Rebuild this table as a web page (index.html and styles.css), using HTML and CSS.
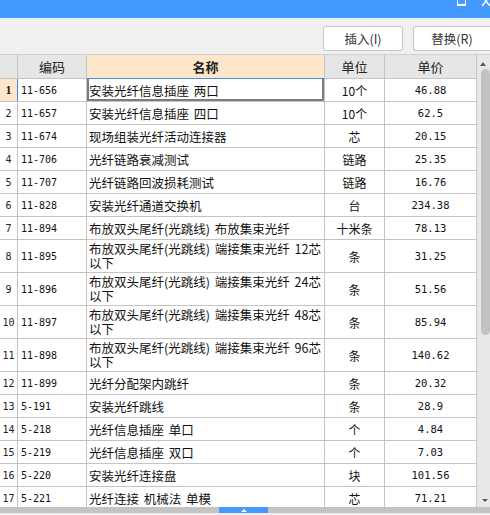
FILE: index.html
```html
<!DOCTYPE html>
<html lang="zh-CN">
<head>
<meta charset="utf-8">
<title>定额</title>
<link rel="stylesheet" href="styles.css">
</head>
<body>
<div class="titlebar">
  <svg class="ico-max" width="9" height="6" viewBox="0 0 9 6"><rect x="0.5" y="-3" width="8" height="7.5" fill="none" stroke="#fff" stroke-width="1"/><line x1="0" y1="5" x2="9" y2="5" stroke="#fff" stroke-width="2"/></svg>
  <svg class="ico-close" width="8" height="7" viewBox="0 0 8 7"><line x1="0" y1="-4" x2="8" y2="6" stroke="#fff" stroke-width="1.4"/><line x1="8" y1="-4" x2="0" y2="6" stroke="#fff" stroke-width="1.4"/></svg>
</div>
<div class="toolbar">
  <button class="btn btn-insert">插入(I)</button>
  <button class="btn btn-replace">替换(R)</button>
</div>
<div class="main">
  <div class="grid">
    <div class="row head">
      <div class="c rn"></div>
      <div class="c hc">编码</div>
      <div class="c hc hsel">名称</div>
      <div class="c hc">单位</div>
      <div class="c hc">单价</div>
    </div>
    <div class="row cur">
      <div class="c rn">1</div><div class="c code">11-656</div><div class="c name sel">安装光纤信息插座 两口</div><div class="c unit">10个</div><div class="c price">46.88</div>
    </div>
    <div class="row">
      <div class="c rn">2</div><div class="c code">11-657</div><div class="c name">安装光纤信息插座 四口</div><div class="c unit">10个</div><div class="c price">62.5</div>
    </div>
    <div class="row">
      <div class="c rn">3</div><div class="c code">11-674</div><div class="c name">现场组装光纤活动连接器</div><div class="c unit">芯</div><div class="c price">20.15</div>
    </div>
    <div class="row">
      <div class="c rn">4</div><div class="c code">11-706</div><div class="c name">光纤链路衰减测试</div><div class="c unit">链路</div><div class="c price">25.35</div>
    </div>
    <div class="row">
      <div class="c rn">5</div><div class="c code">11-707</div><div class="c name">光纤链路回波损耗测试</div><div class="c unit">链路</div><div class="c price">16.76</div>
    </div>
    <div class="row">
      <div class="c rn">6</div><div class="c code">11-828</div><div class="c name">安装光纤通道交换机</div><div class="c unit">台</div><div class="c price">234.38</div>
    </div>
    <div class="row">
      <div class="c rn">7</div><div class="c code">11-894</div><div class="c name">布放双头尾纤(光跳线) 布放集束光纤</div><div class="c unit">十米条</div><div class="c price">78.13</div>
    </div>
    <div class="row tall">
      <div class="c rn">8</div><div class="c code">11-895</div><div class="c name"><span class="ln">布放双头尾纤(光跳线) 端接集束光纤 12芯</span><span class="ln">以下</span></div><div class="c unit">条</div><div class="c price">31.25</div>
    </div>
    <div class="row tall">
      <div class="c rn">9</div><div class="c code">11-896</div><div class="c name"><span class="ln">布放双头尾纤(光跳线) 端接集束光纤 24芯</span><span class="ln">以下</span></div><div class="c unit">条</div><div class="c price">51.56</div>
    </div>
    <div class="row tall">
      <div class="c rn">10</div><div class="c code">11-897</div><div class="c name"><span class="ln">布放双头尾纤(光跳线) 端接集束光纤 48芯</span><span class="ln">以下</span></div><div class="c unit">条</div><div class="c price">85.94</div>
    </div>
    <div class="row tall">
      <div class="c rn">11</div><div class="c code">11-898</div><div class="c name"><span class="ln">布放双头尾纤(光跳线) 端接集束光纤 96芯</span><span class="ln">以下</span></div><div class="c unit">条</div><div class="c price">140.62</div>
    </div>
    <div class="row">
      <div class="c rn">12</div><div class="c code">11-899</div><div class="c name">光纤分配架内跳纤</div><div class="c unit">条</div><div class="c price">20.32</div>
    </div>
    <div class="row">
      <div class="c rn">13</div><div class="c code">5-191</div><div class="c name">安装光纤跳线</div><div class="c unit">条</div><div class="c price">28.9</div>
    </div>
    <div class="row">
      <div class="c rn">14</div><div class="c code">5-218</div><div class="c name">光纤信息插座 单口</div><div class="c unit">个</div><div class="c price">4.84</div>
    </div>
    <div class="row">
      <div class="c rn">15</div><div class="c code">5-219</div><div class="c name">光纤信息插座 双口</div><div class="c unit">个</div><div class="c price">7.03</div>
    </div>
    <div class="row">
      <div class="c rn">16</div><div class="c code">5-220</div><div class="c name">安装光纤连接盘</div><div class="c unit">块</div><div class="c price">101.56</div>
    </div>
    <div class="row">
      <div class="c rn">17</div><div class="c code">5-221</div><div class="c name">光纤连接 机械法 单模</div><div class="c unit">芯</div><div class="c price">71.21</div>
    </div>
  </div>
  <div class="vscroll">
    <span class="arr-up"></span>
    <span class="thumb"></span>
    <span class="arr-down"></span>
  </div>
</div>
<div class="hscroll">
  <div class="hthumb"><span class="tri"></span></div>
</div>
</body>
</html>
```

FILE: styles.css
```css
* { box-sizing: border-box; }
html, body { margin: 0; padding: 0; }
body {
  width: 490px;
  height: 515px;
  overflow: hidden;
  background: #f0f0f0;
  font-family: "Noto Sans CJK SC", sans-serif;
  color: #111;
}
.titlebar {
  height: 18px;
  background: #4499ff;
  display: flex;
  justify-content: flex-end;
  align-items: flex-start;
}
.ico-max { display: block; margin-right: 16px; }
.ico-close { display: block; }

.toolbar {
  height: 37px;
  display: flex;
  justify-content: flex-end;
  align-items: flex-start;
  gap: 10px;
  padding-top: 8px;
  border-bottom: 1px solid #cfcfcf;
}
.btn {
  height: 25px;
  background: #fff;
  border: 1px solid #c6c6c6;
  border-radius: 3px;
  font-family: "Noto Sans CJK SC", sans-serif;
  font-size: 12.5px;
  color: #333;
  padding: 0;
  display: flex;
  align-items: center;
  justify-content: center;
}
.btn-insert { width: 80px; }
.btn-replace { width: 77px; border-right: none; border-radius: 3px 0 0 3px; }

.main {
  height: 452px;
  display: flex;
  overflow: hidden;
}
.grid {
  width: 477px;
  overflow: hidden;
}
.row {
  display: grid;
  grid-template-columns: 18px 69px 238px 60px 92px;
  height: 23px;
}
.row.tall { height: 33px; }
.row.head { height: 24px; }
.c {
  border-right: 1px solid #c4c4c4;
  border-bottom: 1px solid #c4c4c4;
  background: #fff;
  display: flex;
  align-items: center;
  overflow: hidden;
  white-space: nowrap;
}
.head .c {
  background: #e6e6e6;
  justify-content: center;
  font-size: 13px;
  color: #222;
}
.head .hsel {
  background: #fde6c9;
  font-weight: bold;
  border-bottom-color: #4a90e2;
}
.rn {
  justify-content: center;
  font-family: "DejaVu Sans Mono", monospace;
  font-size: 10px;
  color: #222;
}
.cur .rn {
  background: #fde6c9;
  border-right-color: #3b8ee6;
  font-family: "Liberation Serif", serif;
  font-weight: bold;
  font-size: 12px;
}
.code {
  padding-left: 3px;
  font-family: "DejaVu Sans Mono", monospace;
  font-size: 10px;
}
.name {
  padding-left: 2px;
  font-size: 12.5px;
  word-spacing: 2px;
  color: #111;
}
.row.tall .name {
  flex-direction: column;
  align-items: flex-start;
  justify-content: center;
}
.ln {
  display: block;
  height: 14px;
  line-height: 14px;
}
.name.sel {
  box-shadow: inset 2px 0 #7c7c7c, inset -2px 0 #7c7c7c, inset 0 -2px #7c7c7c;
}
.unit {
  justify-content: center;
  font-size: 12px;
}
.price {
  justify-content: center;
  font-family: "DejaVu Sans Mono", monospace;
  font-size: 10.5px;
}

.vscroll {
  width: 13px;
  background: #e8e8e8;
  display: flex;
  flex-direction: column;
  align-items: flex-start;
}
.arr-up {
  margin: 7px 0 0 3px;
  width: 0;
  height: 0;
  border-left: 3px solid transparent;
  border-right: 3px solid transparent;
  border-bottom: 4px solid #5a5a5a;
}
.thumb {
  margin: 3px 0 0 4px;
  width: 9px;
  height: 266px;
  border-radius: 5px;
  background: #c2c2c2;
}
.arr-down {
  margin: auto 0 5px 5px;
  width: 0;
  height: 0;
  border-left: 3.5px solid transparent;
  border-right: 3.5px solid transparent;
  border-top: 3px solid #5a5a5a;
}

.hscroll {
  height: 6px;
  background: #c3c3c3;
  display: flex;
}
.hthumb {
  margin-left: 219px;
  width: 49px;
  height: 6px;
  background: #4499ff;
  display: flex;
  align-items: center;
  justify-content: center;
}
.tri {
  width: 0;
  height: 0;
  border-left: 3px solid transparent;
  border-right: 3px solid transparent;
  border-bottom: 3px solid #fff;
}
```
